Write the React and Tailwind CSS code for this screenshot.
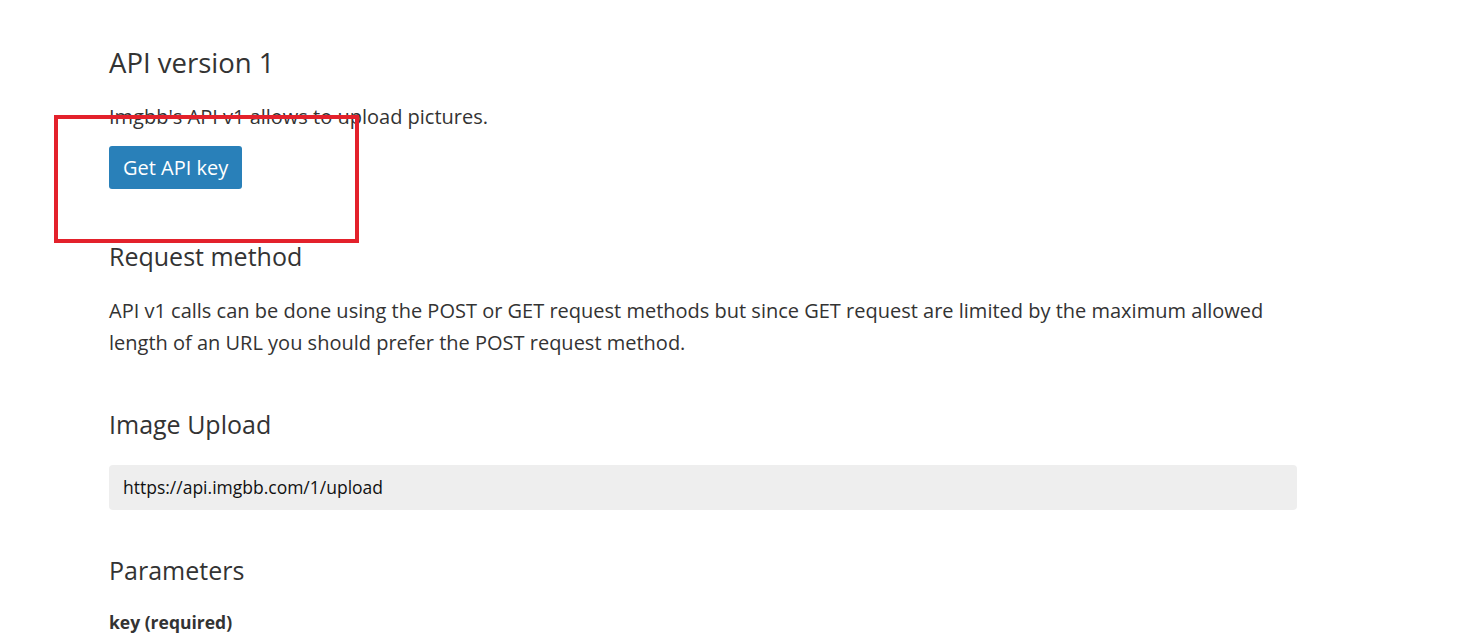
const font = { fontFamily: '"Open Sans", "Liberation Sans", sans-serif' };

const Heading = ({ children, className = '' }) => (
  <h3 className={`leading-[31px] font-normal text-[#333] ${className}`}>{children}</h3>
);

export default function App() {
  return (
    <div className="relative min-h-[641px] bg-white overflow-hidden" style={font}>
      <div className="w-[1188px] ml-[109px] pt-[47px] text-[#333]">
        <Heading className="text-[27.5px]">API version 1</Heading>
        <p className="mt-[23px] text-[20px] leading-[32px]">Imgbb's API v1 allows to upload pictures.</p>
        <button
          type="button"
          className="mt-[13px] h-[43px] px-[14px] rounded-[3px] bg-[#2980b9] text-white text-[20px]"
        >
          Get API key
        </button>

        <Heading className="mt-[52px] text-[25px]">Request method</Heading>
        <p className="mt-[23px] text-[20px] leading-[32px]">
          API v1 calls can be done using the POST or GET request methods but since GET request are limited by the maximum allowed
          length of an URL you should prefer the POST request method.
        </p>

        <Heading className="mt-[50px] text-[25px]">Image Upload</Heading>
        <div className="mt-[25px] h-[45px] flex items-center px-[14px] rounded-[4px] bg-[#eeeeee] text-[#111] text-[17.5px]">
          https://api.imgbb.com/1/upload
        </div>

        <Heading className="mt-[45px] text-[25px]">Parameters</Heading>
        <p className="mt-[20px] text-[17.5px] leading-[32px] font-bold">key (required)</p>
      </div>

      {/* annotation box */}
      <div className="absolute left-[54px] top-[115px] w-[305px] h-[128px] border-4 border-[#e3212b] pointer-events-none" />
    </div>
  );
}
